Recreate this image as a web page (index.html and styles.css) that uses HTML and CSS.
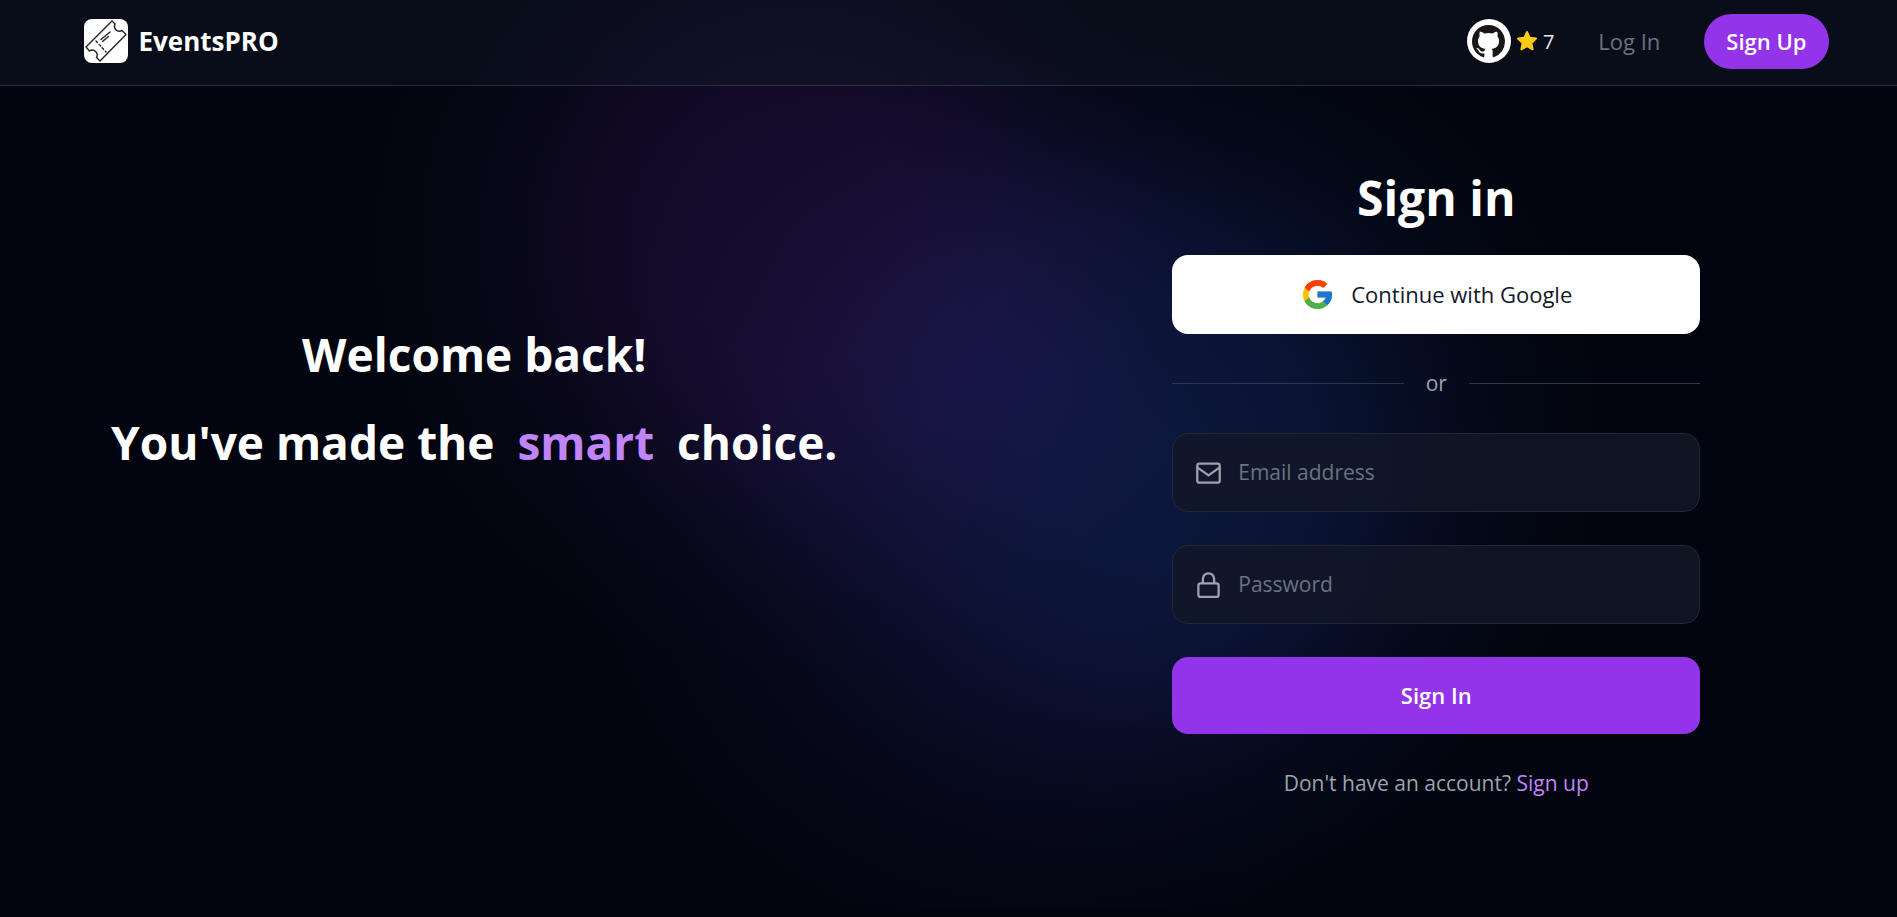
FILE: index.html
```html
<!DOCTYPE html>
<html lang="en">
<head>
  <meta charset="UTF-8" />
  <meta name="viewport" content="width=device-width, initial-scale=1.0" />
  <title>Sign in | EventsPRO</title>
  <link rel="stylesheet" href="styles.css">
</head>
<body>
  <div class="page">
    <header class="site-header">
      <div class="header-inner">
        <a class="brand" href="#">
          <svg class="brand-logo" viewBox="0 0 44 44" aria-hidden="true">
            <rect width="44" height="44" rx="8" fill="#fff" />
            <g fill="none" stroke="#222" stroke-width="1.4" stroke-linecap="round" stroke-linejoin="round">
              <path d="M28 2 L31 5 C29 9 33 14 38 11.500 L42 15.500 L16 42 L12.500 38.500 C15 34 10 29 5.500 32 L2 28 Z" />
              <path d="M12 22 L22 33" stroke-dasharray="2 2.600" />
              <path d="M17 20.500 L26 13 M18.500 22.500 L24.500 17.500" />
            </g>
          </svg>
          <span class="brand-name">EventsPRO</span>
        </a>
        <nav class="header-nav">
          <a class="github" href="#" aria-label="GitHub stars">
            <span class="github-badge">
              <svg viewBox="0 0 16 16" width="33" height="33" aria-hidden="true">
                <path fill="#181616" d="M8 0C3.580 0 0 3.580 0 8c0 3.540 2.290 6.530 5.470 7.590.4.070.55-.17.55-.38 0-.19-.01-.82-.01-1.490-2.010.37-2.530-.49-2.690-.94-.09-.23-.48-.94-.82-1.130-.28-.15-.68-.52-.01-.53.63-.01 1.080.58 1.230.82.72 1.210 1.870.87 2.330.66.07-.52.28-.87.51-1.070-1.780-.2-3.640-.89-3.640-3.950 0-.87.31-1.590.82-2.150-.08-.2-.36-1.020.08-2.120 0 0 .67-.21 2.200.82.64-.18 1.320-.27 2-.27s1.360.09 2 .27c1.530-1.040 2.200-.82 2.200-.82.44 1.100.16 1.920.08 2.120.51.56.82 1.270.82 2.150 0 3.070-1.870 3.750-3.650 3.950.29.25.54.73.54 1.480 0 1.070-.01 1.930-.01 2.200 0 .21.15.46.55.38A8.010 8.010 0 0 0 16 8c0-4.420-3.580-8-8-8z" />
              </svg>
            </span>
            <svg class="star" viewBox="0 0 24 24" aria-hidden="true">
              <path d="M12 3 L14.700 8.800 L21 9.600 L16.400 14 L17.600 20.300 L12 17.200 L6.400 20.300 L7.600 14 L3 9.600 L9.300 8.800 Z" />
            </svg>
            <span class="star-count">7</span>
          </a>
          <a class="login-link" href="#">Log In</a>
          <a class="signup-btn" href="#">Sign Up</a>
        </nav>
      </div>
    </header>

    <main class="auth">
      <section class="welcome">
        <p>Welcome back!</p>
        <p>You've made the <span class="accent">smart</span> choice.</p>
      </section>

      <section class="panel">
        <form class="signin-form">
          <h1>Sign in</h1>
          <button class="google-btn" type="button">
            <svg viewBox="0 0 48 48" width="35" height="35" aria-hidden="true">
              <path fill="#FFC107" d="M43.611 20.083H42V20H24v8h11.303c-1.649 4.657-6.080 8-11.303 8-6.627 0-12-5.373-12-12s5.373-12 12-12c3.059 0 5.842 1.154 7.961 3.039l5.657-5.657C34.046 6.053 29.268 4 24 4 12.955 4 4 12.955 4 24s8.955 20 20 20 20-8.955 20-20c0-1.341-.138-2.650-.389-3.917z" />
              <path fill="#FF3D00" d="M6.306 14.691l6.571 4.819C14.655 15.108 18.961 12 24 12c3.059 0 5.842 1.154 7.961 3.039l5.657-5.657C34.046 6.053 29.268 4 24 4 16.318 4 9.656 8.337 6.306 14.691z" />
              <path fill="#4CAF50" d="M24 44c5.166 0 9.860-1.977 13.409-5.192l-6.190-5.238C29.211 35.091 26.715 36 24 36c-5.202 0-9.619-3.317-11.283-7.946l-6.522 5.025C9.505 39.556 16.227 44 24 44z" />
              <path fill="#1976D2" d="M43.611 20.083H42V20H24v8h11.303c-.792 2.237-2.231 4.166-4.087 5.571l6.193 5.238C36.971 39.205 44 34 44 24c0-1.341-.138-2.650-.389-3.917z" />
            </svg>
            Continue with Google
          </button>

          <div class="divider">or</div>

          <div class="field">
            <label for="email" aria-label="Email address">
              <svg viewBox="0 0 24 24" aria-hidden="true">
                <rect x="2" y="4" width="20" height="17" rx="2" />
                <path d="M2 7.500l10 7 10-7" />
              </svg>
            </label>
            <input id="email" type="email" placeholder="Email address" />
          </div>

          <div class="field">
            <label for="password" aria-label="Password">
              <svg viewBox="0 0 24 24" aria-hidden="true">
                <rect x="3" y="11" width="18" height="12" rx="2" />
                <path d="M7 11V7a5 5 0 0 1 10 0v4" />
              </svg>
            </label>
            <input id="password" type="password" placeholder="Password" />
          </div>

          <button class="submit-btn" type="submit">Sign In</button>
          <p class="switch">Don't have an account? <a href="#">Sign up</a></p>
        </form>
      </section>
    </main>
  </div>
</body>
</html>
```

FILE: styles.css
```css
* {
  box-sizing: border-box;
}
body {
  margin: 0;
  font-family: "Segoe UI", "Open Sans", "Noto Sans", sans-serif;
  font-size: 21px;
  line-height: 33px;
  background-color: #02040c;
  color: #fff;
}
a {
  color: inherit;
  text-decoration: none;
}

/* soft purple and blue glows behind the whole page */
.page {
  display: flex;
  flex-direction: column;
  min-height: calc(100vh - 6px);
  background-color: #02050f;
  background-image:
    radial-gradient(circle at 42% 240px, rgba(147, 51, 234, 0.13) 0, rgba(147, 51, 234, 0.12) 130px, rgba(147, 51, 234, 0.09) 210px, rgba(147, 51, 234, 0.045) 290px, rgba(147, 51, 234, 0.012) 370px, rgba(147, 51, 234, 0) 440px),
    radial-gradient(circle at 62% 440px, rgba(37, 99, 235, 0.12) 0, rgba(37, 99, 235, 0.11) 140px, rgba(37, 99, 235, 0.08) 230px, rgba(37, 99, 235, 0.035) 310px, rgba(37, 99, 235, 0.01) 380px, rgba(37, 99, 235, 0) 450px),
    radial-gradient(circle at 55% 500px, rgba(79, 70, 229, 0.12) 0, rgba(79, 70, 229, 0.11) 130px, rgba(79, 70, 229, 0.07) 260px, rgba(79, 70, 229, 0.025) 370px, rgba(79, 70, 229, 0) 480px);
}

.site-header {
  background: rgba(17, 24, 39, 0.4);
  border-bottom: 1px solid rgba(255, 255, 255, 0.13);
}
.header-inner {
  display: flex;
  align-items: center;
  justify-content: space-between;
  max-width: 1760px;
  height: 85px;
  margin: 0 auto;
  padding: 0 0 3px 15px;
}
.brand {
  display: flex;
  align-items: center;
  gap: 11px;
}
.brand-logo {
  width: 44px;
  height: 44px;
}
.brand-name {
  font-size: 26px;
  font-weight: 700;
}
.header-nav {
  display: flex;
  align-items: center;
  gap: 44px;
  font-size: 22px;
}
.github {
  display: flex;
  align-items: center;
  gap: 4px;
}
.github-badge {
  display: flex;
  align-items: center;
  justify-content: center;
  width: 44px;
  height: 44px;
  border-radius: 50%;
  background: #fff;
}
.star {
  width: 24px;
  height: 24px;
  fill: #facc15;
  stroke: #facc15;
  stroke-width: 2;
  stroke-linejoin: round;
}
.star-count {
  color: #e5e7eb;
  font-size: 20px;
}
.login-link {
  color: #6b7280;
}
.signup-btn {
  padding: 11px 22px;
  border-radius: 28px;
  background: #9333ea;
  font-weight: 600;
}

.auth {
  display: grid;
  grid-template-columns: 1fr 1fr;
  flex: 1;
}
.welcome {
  padding-top: 224px;
  text-align: center;
  font-size: 46px;
  font-weight: 700;
  line-height: 88px;
}
.welcome p {
  margin: 0;
}
.accent {
  margin: 0 11px;
  color: #c084fc;
}

.panel {
  display: flex;
  justify-content: center;
  padding: 77px 0 0 27px;
}
.signin-form {
  display: flex;
  flex-direction: column;
  width: 100%;
  max-width: 528px;
}
h1 {
  margin: 0 0 22px;
  text-align: center;
  font-size: 48px;
  font-weight: 700;
  line-height: 70px;
}
button {
  border: 0;
  border-radius: 16px;
  font: inherit;
  font-size: 22px;
  cursor: pointer;
}
.google-btn {
  display: flex;
  align-items: center;
  justify-content: center;
  gap: 16px;
  height: 79px;
  background: #fff;
  color: #111827;
  font-weight: 500;
}
.divider {
  display: flex;
  align-items: center;
  gap: 22px;
  margin: 33px 0;
  color: #9ca3af;
}
.divider::before,
.divider::after {
  content: "";
  flex: 1;
  height: 1px;
  background: #2d3748;
}
.field {
  display: flex;
  align-items: center;
  gap: 16px;
  height: 79px;
  margin-bottom: 33px;
  padding: 0 22px;
  border: 1px solid #1f2937;
  border-radius: 16px;
  background: rgba(17, 24, 39, 0.8);
}
.field label {
  display: flex;
}
.field svg {
  width: 27px;
  height: 27px;
  fill: none;
  stroke: #9ca3af;
  stroke-width: 2;
  stroke-linejoin: round;
}
.field input {
  flex: 1;
  min-width: 0;
  padding: 0;
  border: 0;
  outline: 0;
  background: transparent;
  color: #fff;
  font: inherit;
}
.field input::placeholder {
  color: #6b7280;
  opacity: 1;
}
.submit-btn {
  height: 77px;
  background: #9333ea;
  color: #fff;
  font-weight: 600;
}
.switch {
  margin: 33px 0;
  text-align: center;
  color: #9ca3af;
}
.switch a {
  color: #c084fc;
}
```
